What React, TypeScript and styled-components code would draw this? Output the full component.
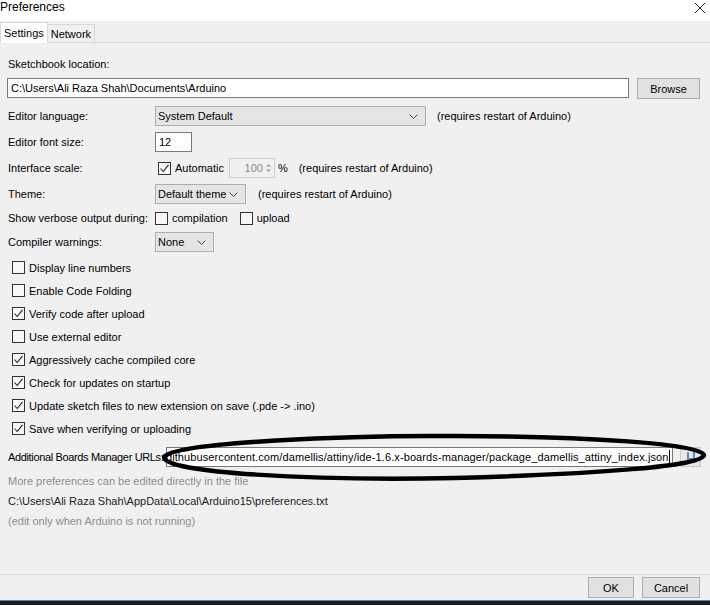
import React from 'react'
import styled, { createGlobalStyle } from 'styled-components'

const GlobalStyle = createGlobalStyle`
  html, body {
    margin: 0;
    padding: 0;
    background: #f0f0f0;
  }
  body {
    font-family: "Liberation Sans", Arial, sans-serif;
    font-size: 11px;
    color: #000;
  }
`

const checks = [
  { label: 'Display line numbers', on: false },
  { label: 'Enable Code Folding', on: false },
  { label: 'Verify code after upload', on: true },
  { label: 'Use external editor', on: false },
  { label: 'Aggressively cache compiled core', on: true },
  { label: 'Check for updates on startup', on: true },
  { label: 'Update sketch files to new extension on save (.pde -> .ino)', on: true },
  { label: 'Save when verifying or uploading', on: true },
]

const Chevron = () => (
  <svg width="9" height="5" viewBox="0 0 9 5">
    <polyline points="0.5,0.5 4.5,4.5 8.5,0.5" fill="none" stroke="#444" strokeWidth="1" />
  </svg>
)

const Tick = () => (
  <svg width="11" height="11" viewBox="0 0 11 11">
    <polyline points="1.5,5.5 4.2,8.5 9.5,1.8" fill="none" stroke="#222" strokeWidth="1.1" />
  </svg>
)

const CheckBox = ({ on }: { on: boolean }) => <Box>{on && <Tick />}</Box>

const App = () => {
  return (
    <>
      <GlobalStyle />
      <Window>
        <TitleBar>
          <Title>Preferences</Title>
          <Close width="12" height="12" viewBox="0 0 12 12">
            <path d="M1 1 L11 11 M11 1 L1 11" stroke="#222" strokeWidth="1" />
          </Close>
        </TitleBar>
        <TabStrip>
          <Tab $active>Settings</Tab>
          <Tab>Network</Tab>
        </TabStrip>
        <Panel>
          <FieldLabel>Sketchbook location:</FieldLabel>
          <PathRow>
            <TextField $w={622}>C:\Users\Ali Raza Shah\Documents\Arduino</TextField>
            <Button $w={63}>Browse</Button>
          </PathRow>

          <FormRow $h={26} $first>
            <span>Editor language:</span>
            <Inline>
              <Select $w={271}>
                System Default
                <Chevron />
              </Select>
              <Hint $ml={11}>(requires restart of Arduino)</Hint>
            </Inline>
          </FormRow>
          <FormRow $h={26}>
            <span>Editor font size:</span>
            <Inline>
              <TextField $w={37}>12</TextField>
            </Inline>
          </FormRow>
          <FormRow $h={26}>
            <span>Interface scale:</span>
            <Inline>
              <CheckLabel $pl={3}>
                <CheckBox on />
                Automatic
              </CheckLabel>
              <Spinner>
                <span>100</span>
                <Arrows>
                  <svg width="7" height="12" viewBox="0 0 7 12">
                    <path d="M1 4.5 L3.5 2 L6 4.5 Z M1 7.5 L3.5 10 L6 7.5 Z" fill="#999" />
                  </svg>
                </Arrows>
              </Spinner>
              <Hint $ml={3}>%</Hint>
              <Hint $ml={11}>(requires restart of Arduino)</Hint>
            </Inline>
          </FormRow>
          <FormRow $h={26}>
            <span>Theme:</span>
            <Inline>
              <Select $w={91}>
                Default theme
                <Chevron />
              </Select>
              <Hint $ml={12}>(requires restart of Arduino)</Hint>
            </Inline>
          </FormRow>
          <FormRow $h={22}>
            <span>Show verbose output during:</span>
            <Inline>
              <CheckLabel>
                <CheckBox on={false} />
                compilation
              </CheckLabel>
              <CheckLabel $pl={12}>
                <CheckBox on={false} />
                upload
              </CheckLabel>
            </Inline>
          </FormRow>
          <FormRow $h={26}>
            <span>Compiler warnings:</span>
            <Inline>
              <Select $w={59}>
                None
                <Chevron />
              </Select>
            </Inline>
          </FormRow>

          <CheckList>
            {checks.map((c) => (
              <CheckRow key={c.label}>
                <CheckBox on={c.on} />
                {c.label}
              </CheckRow>
            ))}
          </CheckList>

          <UrlRow>
            <UrlLabel>Additional Boards Manager URLs:</UrlLabel>
            <UrlField>
              <UrlText>
                raw.githubusercontent.com/damellis/attiny/ide-1.6.x-boards-manager/package_damellis_attiny_index.json
              </UrlText>
              <Caret />
            </UrlField>
            <IconButton>
              <svg width="10" height="12" viewBox="0 0 10 12">
                <rect x="1" y="1" width="8" height="10" fill="#6b86b3" />
                <rect x="3" y="1" width="4" height="6" fill="#dfe6f2" />
              </svg>
            </IconButton>
          </UrlRow>

          <Notes>
            <Note $muted>More preferences can be edited directly in the file</Note>
            <Note>C:\Users\Ali Raza Shah\AppData\Local\Arduino15\preferences.txt</Note>
            <Note $muted>(edit only when Arduino is not running)</Note>
          </Notes>

          <Scribble width="556" height="56" viewBox="0 0 556 56">
            <path
              d="M9 27 C 20 12, 200 5, 300 6 C 430 6, 548 14, 549 25 C 550 36, 440 44, 300 48 C 160 51, 7 43, 9 27 Z"
              fill="none"
              stroke="#000"
              strokeWidth="4.5"
            />
          </Scribble>
        </Panel>
        <Footer>
          <Button $w={46}>OK</Button>
          <Button $w={58}>Cancel</Button>
        </Footer>
        <Taskbar />
      </Window>
    </>
  )
}

const Window = styled.div`
  width: 710px;
  height: 605px;
  display: flex;
  flex-direction: column;
  background: #f0f0f0;
  overflow: hidden;
`

const TitleBar = styled.div`
  height: 21px;
  flex: none;
  background: #fff;
  display: flex;
  justify-content: space-between;
  align-items: flex-start;
`

const Title = styled.div`
  font-size: 12px;
  line-height: 14px;
`

const Close = styled.svg`
  margin: 2px 4px 0 0;
`

const TabStrip = styled.div`
  height: 21px;
  flex: none;
  display: flex;
  align-items: flex-end;
  border-bottom: 1px solid #d9d9d9;
  background: #f0f0f0;
`

const Tab = styled.div<{ $active?: boolean }>`
  height: ${(p) => (p.$active ? 21 : 18)}px;
  box-sizing: border-box;
  padding: 0 3px;
  display: flex;
  align-items: center;
  background: ${(p) => (p.$active ? '#fff' : '#f0f0f0')};
  border: 1px solid #d9d9d9;
  border-bottom: none;
  margin-bottom: ${(p) => (p.$active ? -1 : 0)}px;
  margin-left: ${(p) => (p.$active ? 0 : -1)}px;
  font-size: 11px;
`

const Panel = styled.div`
  flex: 1;
  position: relative;
  padding: 0 10px 0 7px;
`

const FieldLabel = styled.div`
  margin: 14px 0 0 1px;
  line-height: 14px;
`

const PathRow = styled.div`
  display: flex;
  gap: 8px;
  margin-top: 7px;
  height: 20px;
`

const TextField = styled.div<{ $w: number }>`
  width: ${(p) => p.$w}px;
  height: 20px;
  box-sizing: border-box;
  background: #fff;
  border: 1px solid #7a7a7a;
  padding: 0 3px;
  display: flex;
  align-items: center;
  white-space: nowrap;
`

const Button = styled.div<{ $w: number }>`
  width: ${(p) => p.$w}px;
  height: 21px;
  box-sizing: border-box;
  background: #e1e1e1;
  border: 1px solid #adadad;
  display: flex;
  align-items: center;
  justify-content: center;
`

const FormRow = styled.div<{ $h: number; $first?: boolean }>`
  display: grid;
  grid-template-columns: 148px 1fr;
  align-items: center;
  height: ${(p) => p.$h}px;
  margin-top: ${(p) => (p.$first ? 5 : 0)}px;
  padding-left: 1px;
`

const Inline = styled.div`
  display: flex;
  align-items: center;
  margin-left: -1px;
`

const Select = styled.div<{ $w: number }>`
  width: ${(p) => p.$w}px;
  height: 20px;
  box-sizing: border-box;
  background: #e5e5e5;
  border: 1px solid #adadad;
  display: flex;
  align-items: center;
  justify-content: space-between;
  padding: 0 7px 0 2px;
`

const Hint = styled.span<{ $ml: number }>`
  margin-left: ${(p) => p.$ml}px;
`

const CheckLabel = styled.span<{ $pl?: number }>`
  display: inline-flex;
  align-items: center;
  gap: 4px;
  padding-left: ${(p) => p.$pl || 0}px;
`

const Box = styled.span`
  width: 13px;
  height: 13px;
  box-sizing: border-box;
  border: 1px solid #333;
  background: #f7f7f7;
  display: inline-flex;
  align-items: center;
  justify-content: center;
  flex: none;
`

const Spinner = styled.div`
  width: 46px;
  height: 20px;
  box-sizing: border-box;
  margin-left: 5px;
  border: 1px solid #cfcfcf;
  background: #f0f0f0;
  color: #8a8a8a;
  display: flex;
  align-items: center;
  justify-content: flex-end;
  gap: 2px;
  padding-right: 2px;
`

const Arrows = styled.span`
  display: flex;
`

const CheckList = styled.div`
  margin-top: 1px;
  padding-left: 5px;
`

const CheckRow = styled.div`
  height: 23px;
  display: flex;
  align-items: center;
  gap: 4px;
`

const UrlRow = styled.div`
  display: flex;
  align-items: center;
  height: 20px;
  margin-top: 7px;
  padding-left: 1px;
`

const UrlLabel = styled.span`
  white-space: nowrap;
  flex: none;
  letter-spacing: -0.35px;
`

const UrlField = styled.div`
  width: 507px;
  flex: none;
  height: 20px;
  box-sizing: border-box;
  margin-left: 3px;
  background: #fff;
  border: 1px solid #7a7a7a;
  display: flex;
  align-items: center;
  justify-content: flex-end;
  overflow: hidden;
  padding-right: 2px;
`

const UrlText = styled.span`
  white-space: nowrap;
  flex: none;
  letter-spacing: 0.1px;
`

const Caret = styled.span`
  width: 1px;
  height: 14px;
  background: #000;
  flex: none;
  margin-left: 1px;
`

const IconButton = styled.div`
  width: 21px;
  flex: none;
  height: 20px;
  box-sizing: border-box;
  margin-left: 7px;
  border: 1px solid #c8c8c8;
  background: #e8e8e8;
  display: flex;
  align-items: center;
  justify-content: center;
`

const Notes = styled.div`
  margin-top: 4px;
`

const Note = styled.div<{ $muted?: boolean }>`
  height: 20px;
  line-height: 20px;
  padding-left: 1px;
  color: ${(p) => (p.$muted ? '#8c8c8c' : '#222')};
`

const Scribble = styled.svg`
  position: absolute;
  left: 155px;
  top: 387px;
  pointer-events: none;
`

const Footer = styled.div`
  height: 26px;
  flex: none;
  box-sizing: border-box;
  border-top: 1px solid #dadada;
  display: flex;
  justify-content: flex-end;
  align-items: flex-start;
  gap: 8px;
  padding: 2px 10px 0 0;
`

const Taskbar = styled.div`
  height: 4px;
  flex: none;
  background: #1c1c1c;
  border-top: 1px solid #3b8ed0;
`

export default App
